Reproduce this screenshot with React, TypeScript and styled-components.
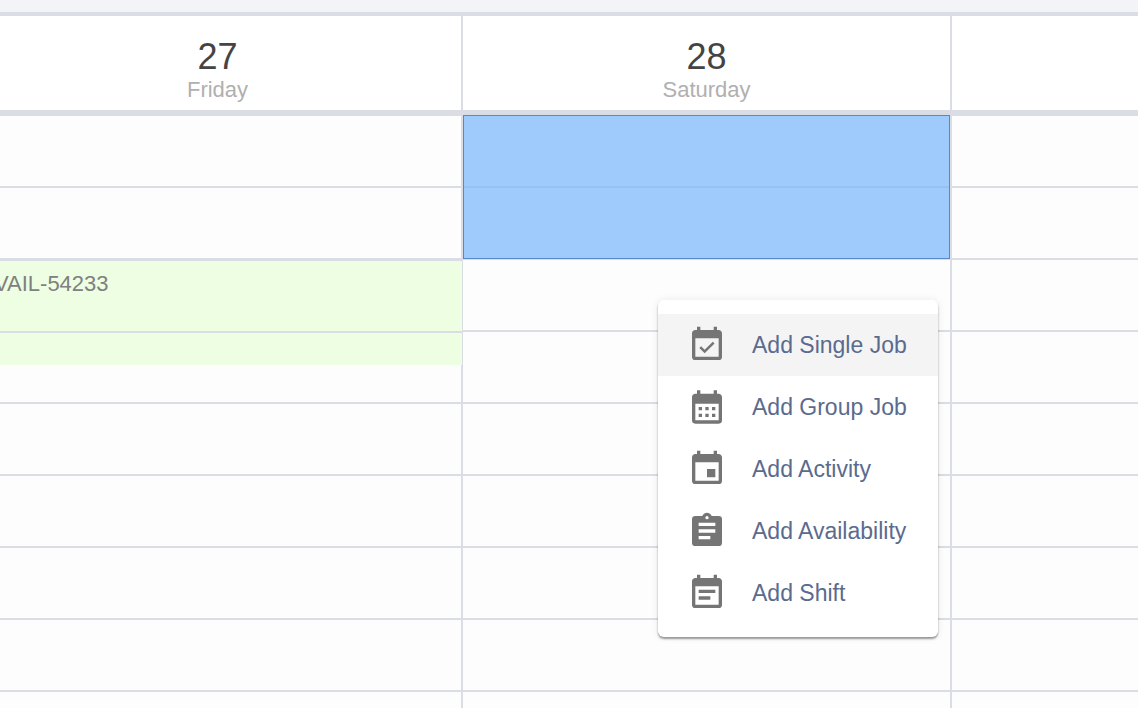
import React from "react";
import styled, { createGlobalStyle } from "styled-components";

const LINE = "#dadde4";

const GlobalStyle = createGlobalStyle`
  *, *::before, *::after { box-sizing: border-box; }
  body {
    margin: 0;
    background: #fdfdfd;
    font-family: "Liberation Sans", Arial, Helvetica, sans-serif;
  }
`;

const Page = styled.main`
  display: flex;
  flex-direction: column;
  height: 100vh;
  overflow: hidden;
`;

const TopStrip = styled.div`
  flex: none;
  height: 16px;
  background: #f3f4f8;
  border-bottom: 4px solid ${LINE};
`;

/* The week is scrolled sideways, so the first day starts off the left edge. */
const Days = styled.div`
  display: grid;
  grid-template-columns: 489fr 489fr 186fr;
  flex: none;
  margin-left: -26px;
`;

const HeaderRow = styled(Days)`
  background: #ffffff;
  border-bottom: 6px solid ${LINE};
`;

const DayHeader = styled.header<{ $last?: boolean }>`
  min-height: 94px;
  padding: 21px 0 7px;
  text-align: center;
  border-right: ${(p) => (p.$last ? "none" : `2px solid ${LINE}`)};
`;

const DayNumber = styled.div`
  font-size: 36px;
  line-height: 40px;
  color: #444444;
`;

const DayName = styled.div`
  font-size: 22px;
  line-height: 26px;
  color: #b0b0b0;
`;

const DayColumn = styled.section<{ $last?: boolean }>`
  position: relative;
  border-right: ${(p) => (p.$last ? "none" : `2px solid ${LINE}`)};
`;

const Slot = styled.div`
  height: 72px;
  background: #fdfdfd;
  border-bottom: 2px solid ${LINE};
`;

const Selection = styled.div`
  position: absolute;
  top: -1px;
  left: 0;
  right: 0;
  height: 144px;
  background: rgba(122, 184, 249, 0.73);
  border: 1px solid #5b88c5;
`;

const Event = styled.article`
  position: absolute;
  top: 144px;
  left: 0;
  right: -1px;
  background: #edfee3;
  border-top: 1px solid ${LINE};
`;

const EventTitle = styled.div`
  height: 72px;
  padding: 10px 8px 0 20px;
  border-bottom: 2px solid ${LINE};
  font-size: 22px;
  line-height: 26px;
  color: #808080;
`;

const EventTail = styled.div`
  height: 32px;
`;

const Menu = styled.div`
  position: absolute;
  top: 184px;
  left: 195px;
  z-index: 2;
  width: 280px;
  padding: 14px 0 13px;
  border-radius: 6px;
  background: #ffffff;
  box-shadow: 0 2px 2px rgba(0, 0, 0, 0.38), 0 0 8px rgba(0, 0, 0, 0.08);
`;

const MenuItem = styled.button<{ $active?: boolean }>`
  display: flex;
  align-items: center;
  gap: 25px;
  width: 100%;
  height: 62px;
  padding: 0 0 0 29px;
  border: 0;
  background: ${(p) => (p.$active ? "#f4f4f4" : "transparent")};
  color: #5a6b8e;
  font-family: inherit;
  font-size: 23px;
  line-height: 28px;
  text-align: left;
  white-space: nowrap;
  cursor: pointer;
`;

const Icon = styled.svg`
  flex: none;
  width: 40px;
  height: 40px;
  fill: #757575;
`;

const CALENDAR =
  "M19,19H5V8H19M16,1V3H8V1H6V3H5C3.89,3 3,3.89 3,5V19A2,2 0 0,0 5,21H19A2,2 0 0,0 21,19V5C21,3.89 20.1,3 19,3H18V1H16Z";

const menuItems = [
  {
    label: "Add Single Job",
    path: `${CALENDAR}M16.53,11.06L15.47,10L10.59,14.88L8.47,12.76L7.41,13.82L10.59,17L16.53,11.06Z`,
  },
  {
    label: "Add Group Job",
    path: "M19,20H5V10H19M16,2V4H8V2H6V4H5C3.89,4 3,4.89 3,6V20A2,2 0 0,0 5,22H19A2,2 0 0,0 21,20V6C21,4.89 20.1,4 19,4H18V2H16ZM7,12H9V14H7ZM11,12H13V14H11ZM15,12H17V14H15ZM7,16H9V18H7ZM11,16H13V18H11ZM15,16H17V18H15Z",
  },
  { label: "Add Activity", path: `${CALENDAR}M17,12H12V17H17V12Z` },
  {
    label: "Add Availability",
    path: "M17,9H7V7H17M17,13H7V11H17M14,17H7V15H14M12,3A1,1 0 0,1 13,4A1,1 0 0,1 12,5A1,1 0 0,1 11,4A1,1 0 0,1 12,3M19,3H14.82C14.4,1.84 13.3,1 12,1C10.7,1 9.6,1.84 9.18,3H5A2,2 0 0,0 3,5V19A2,2 0 0,0 5,21H19A2,2 0 0,0 21,19V5A2,2 0 0,0 19,3Z",
  },
  { label: "Add Shift", path: `${CALENDAR}M7,10H17V12H7ZM7,14H14V16H7Z` },
];

const Slots = () => (
  <>
    {Array.from({ length: 9 }, (_, i) => (
      <Slot key={i} />
    ))}
  </>
);

const ContextMenu = () => (
  <Menu role="menu">
    {menuItems.map((item, i) => (
      <MenuItem key={item.label} type="button" role="menuitem" $active={i === 0}>
        <Icon viewBox="0 0 24 24" aria-hidden="true">
          <path d={item.path} fillRule="evenodd" />
        </Icon>
        {item.label}
      </MenuItem>
    ))}
  </Menu>
);

export default function App() {
  return (
    <Page>
      <GlobalStyle />
      <TopStrip />
      <HeaderRow>
        <DayHeader>
          <DayNumber>27</DayNumber>
          <DayName>Friday</DayName>
        </DayHeader>
        <DayHeader>
          <DayNumber>28</DayNumber>
          <DayName>Saturday</DayName>
        </DayHeader>
        <DayHeader $last />
      </HeaderRow>
      <Days>
        <DayColumn>
          <Slots />
          <Event>
            <EventTitle>VAIL-54233</EventTitle>
            <EventTail />
          </Event>
        </DayColumn>
        <DayColumn>
          <Slots />
          <Selection />
          <ContextMenu />
        </DayColumn>
        <DayColumn $last>
          <Slots />
        </DayColumn>
      </Days>
    </Page>
  );
}
